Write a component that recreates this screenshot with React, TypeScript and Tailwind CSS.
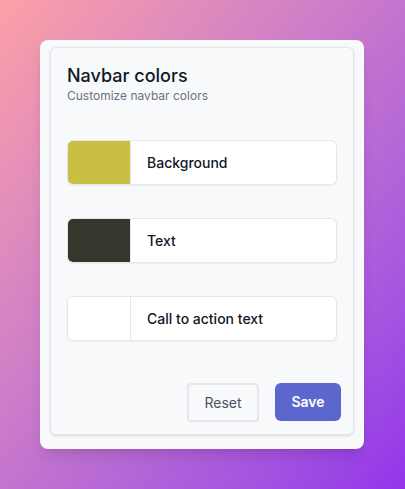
import React from "react";

const rows = [
  { label: "Background", color: "#cbbe44" },
  { label: "Text", color: "#36362d" },
  { label: "Call to action text", color: "#ffffff" },
];

export default function App() {
  return (
    <div
      className="flex h-[489px] w-full items-start bg-linear-to-br from-[#fda0a6] to-[#9333ea] pt-10 pl-10"
      style={{ fontFamily: "Inter, 'Noto Sans', sans-serif" }}
    >
      <div className="h-[409px] w-[324px] rounded-lg bg-[#f8f9fb] px-[10px] pt-[7px] pb-[14px] shadow-lg">
        <div className="flex h-full flex-col rounded-md border border-[#e4e6ea] bg-[#f8f9fb] shadow-sm">
          <div className="px-4 pt-[16px]">
            <h2 className="text-lg leading-6 font-medium text-[#111827]">Navbar colors</h2>
            <p className="text-xs leading-4 text-[#6b7280]">Customize navbar colors</p>
            <div className="mt-[36px] flex flex-col gap-[33px]">
              {rows.map((r) => (
                <div
                  key={r.label}
                  className="flex h-[45px] overflow-hidden rounded-md border border-[#e5e7eb] bg-white shadow-xs"
                >
                  <div
                    className="w-[63px] shrink-0 border-r border-[#e5e7eb]"
                    style={{ backgroundColor: r.color }}
                  />
                  <div className="flex items-center pl-4 text-sm font-medium text-[#111827]">
                    {r.label}
                  </div>
                </div>
              ))}
            </div>
          </div>
          <div className="mt-auto flex justify-end gap-4 pr-3 pb-3">
            <button className="h-[39px] w-[72px] rounded border-2 border-[#e5e7eb] bg-[#f8f9fb] text-sm text-[#4b5563]">
              Reset
            </button>
            <button className="h-[38px] w-[66px] rounded-md bg-[#5c67cd] text-sm font-semibold text-white">
              Save
            </button>
          </div>
        </div>
      </div>
    </div>
  );
}
